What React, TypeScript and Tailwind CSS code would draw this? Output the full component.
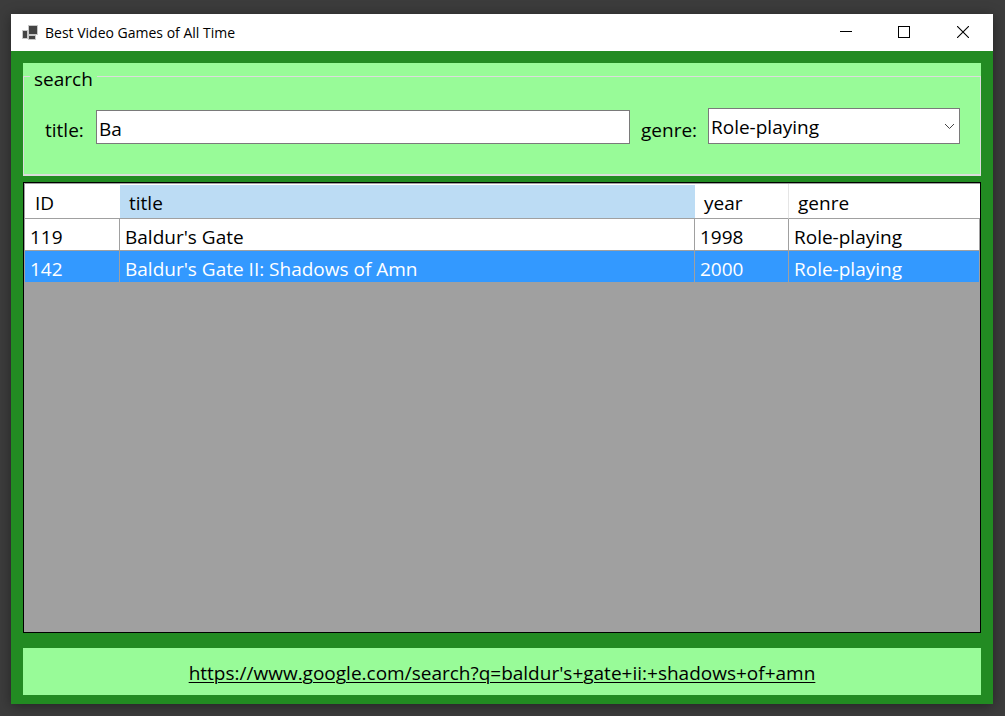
import { useState } from "react";

type Game = { id: number; title: string; year: number; genre: string };

const games: Game[] = [
  { id: 119, title: "Baldur's Gate", year: 1998, genre: "Role-playing" },
  { id: 142, title: "Baldur's Gate II: Shadows of Amn", year: 2000, genre: "Role-playing" },
];

function AppIcon() {
  return (
    <svg width="16" height="16" viewBox="0 0 16 16" aria-hidden="true" shapeRendering="crispEdges">
      <rect x="0" y="5" width="6" height="9" fill="#c8c8c8" />
      <rect x="6" y="10" width="8" height="5" fill="#c8c8c8" />
      <rect x="6" y="0" width="10" height="10" fill="#c8c8c8" />
      <rect x="7" y="1" width="8" height="8" fill="#444444" />
      <rect x="1" y="6" width="4" height="7" fill="#444444" />
      <rect x="7" y="11" width="6" height="3" fill="#444444" />
    </svg>
  );
}

function TitleBar() {
  return (
    <header className="flex h-[37px] items-center bg-white pl-[11px]">
      <AppIcon />
      <h1 className="grow pl-[7px] text-sm text-black">Best Video Games of All Time</h1>
      <button type="button" aria-label="Minimize" className="flex h-full w-[58px] items-center justify-center">
        <svg width="12" height="12" viewBox="0 0 12 12" shapeRendering="crispEdges">
          <rect x="0" y="4" width="12" height="1" fill="#000" />
        </svg>
      </button>
      <button type="button" aria-label="Maximize" className="flex h-full w-[58px] items-center justify-center pb-0.5">
        <svg width="12" height="12" viewBox="0 0 12 12" shapeRendering="crispEdges">
          <rect x="0.5" y="0.5" width="11" height="11" fill="none" stroke="#000" />
        </svg>
      </button>
      <button type="button" aria-label="Close" className="flex h-full w-[60px] items-center justify-center pb-0.5">
        <svg width="12" height="12" viewBox="0 0 12 12">
          <path d="M0 0L12 12M12 0L0 12" stroke="#000" strokeWidth="1.1" />
        </svg>
      </button>
    </header>
  );
}

export default function App() {
  const [title, setTitle] = useState("Ba");
  const [genre, setGenre] = useState("Role-playing");
  const [selected, setSelected] = useState(142);

  const shown = games.filter(
    (g) => g.title.toLowerCase().includes(title.toLowerCase()) && g.genre === genre,
  );
  const current = games.find((g) => g.id === selected) ?? games[0];
  const url = "https://www.google.com/search?q=" + current.title.toLowerCase().replaceAll(" ", "+");

  return (
    <div className="flex min-h-screen flex-col bg-[#3c3c3c] pt-[14px] pr-3 pb-3 pl-[11px] font-['Open_Sans','Noto_Sans',sans-serif] text-[19px] leading-[27px] text-black">
      <div className="flex grow flex-col bg-[#228b22] shadow-[0_2px_12px_rgba(0,0,0,0.4)]">
        <TitleBar />
        <main className="flex grow flex-col px-3 pt-3 pb-[9px]">
          <form className="bg-[#98fb98]" onSubmit={(e) => e.preventDefault()}>
            <fieldset className="min-w-0 border border-b-2 border-[#dcdcdc] px-2">
              <legend className="-ml-0.5 h-[27px] px-1 pt-[3px]">search</legend>
              <div className="flex items-center px-3 pt-[18px] pb-[30px]">
                <label htmlFor="title" className="w-[52px] shrink-0 pt-2 pl-px">
                  title:
                </label>
                <input
                  id="title"
                  value={title}
                  onChange={(e) => setTitle(e.target.value)}
                  className="mt-0.5 h-[34px] min-w-0 grow border border-[#7a7a7a] bg-white px-0.5 pt-1 outline-none"
                />
                <label htmlFor="genre" className="w-[78px] shrink-0 pt-2 pl-[11px]">
                  genre:
                </label>
                <div className="relative w-[252px] shrink-0">
                  <select
                    id="genre"
                    value={genre}
                    onChange={(e) => setGenre(e.target.value)}
                    className="block h-9 w-full appearance-none border border-[#7a7a7a] bg-white pl-0.5 pt-0.5 outline-none"
                  >
                    <option>Role-playing</option>
                  </select>
                  <svg
                    className="pointer-events-none absolute top-[15px] right-[5px]"
                    width="11"
                    height="7"
                    viewBox="0 0 11 7"
                  >
                    <path d="M1 1L5.5 5.5L10 1" fill="none" stroke="#444" />
                  </svg>
                </div>
              </div>
            </fieldset>
          </form>

          <div className="mt-1.5 grow border border-black bg-[#a0a0a0] pt-px pl-px">
            <table className="w-full table-fixed border-separate border-spacing-0 text-left">
              <thead>
                <tr className="h-[35px] bg-white">
                  <th className="w-[95px] border-b border-[#a0a0a0] pt-1 pl-2.5 font-normal">ID</th>
                  <th className="border-t border-b border-t-white border-b-[#a0a0a0] bg-[#bcdcf4] bg-clip-padding pt-[3px] pl-[9px] font-normal">
                    title
                  </th>
                  <th className="w-[94px] border-r border-b border-r-[#e5e5e5] border-b-[#a0a0a0] pt-1 pl-[9px] font-normal">
                    year
                  </th>
                  <th className="w-[191px] border-b border-[#a0a0a0] pt-1 pl-[9px] font-normal">genre</th>
                </tr>
              </thead>
              <tbody className="leading-[25px]">
                {shown.map((g) => (
                  <tr
                    key={g.id}
                    onClick={() => setSelected(g.id)}
                    className={g.id === selected ? "h-8 bg-[#3399ff] text-white" : "h-8 bg-white"}
                  >
                    <td className="border-r border-b border-[#a0a0a0] pt-1.5 pl-[5px]">{g.id}</td>
                    <td className="border-r border-b border-[#a0a0a0] pt-1.5 pl-[5px]">{g.title}</td>
                    <td className="border-r border-b border-[#a0a0a0] pt-1.5 pl-[5px]">{g.year}</td>
                    <td className="border-r border-b border-[#a0a0a0] pt-1.5 pl-[5px]">{g.genre}</td>
                  </tr>
                ))}
              </tbody>
            </table>
          </div>

          <footer className="mt-[15px] flex h-[47px] items-center justify-center bg-[#98fb98] pt-1">
            <a href={url} className="underline decoration-1 underline-offset-2">
              {url}
            </a>
          </footer>
        </main>
      </div>
    </div>
  );
}
